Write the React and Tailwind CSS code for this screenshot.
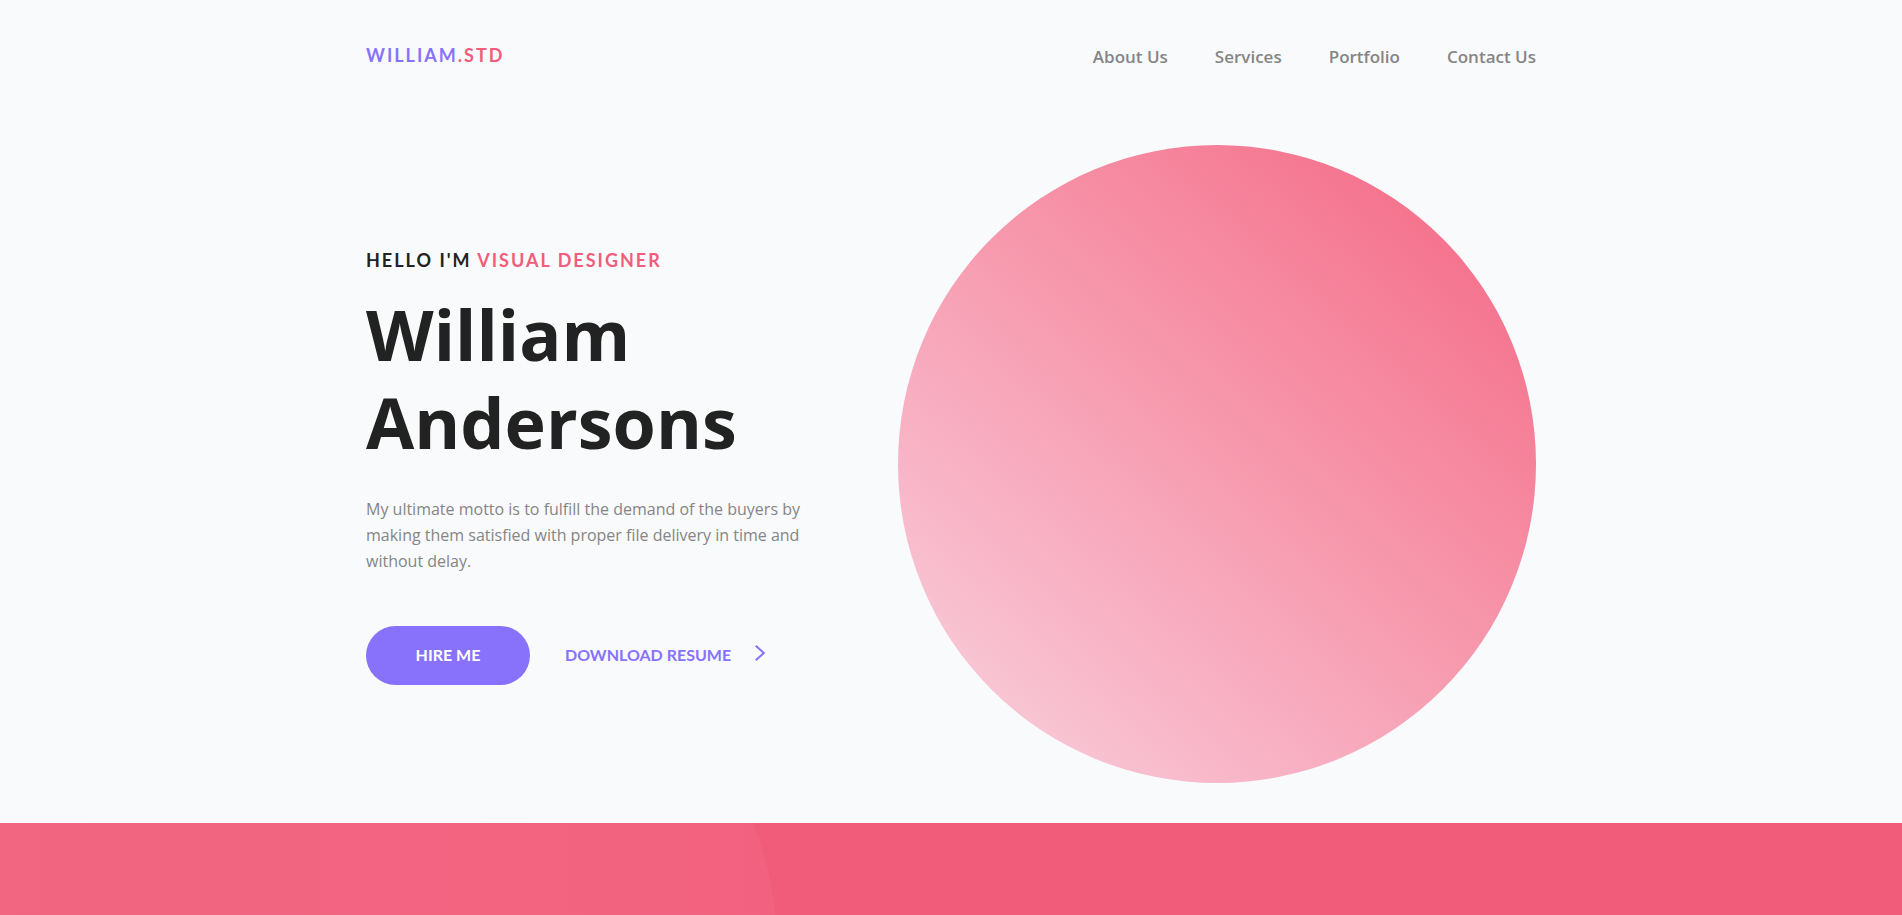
const navLinks = [
  { label: "About Us", href: "#about" },
  { label: "Services", href: "#services" },
  { label: "Portfolio", href: "#portfolio" },
  { label: "Contact Us", href: "#contact" },
];

function Header() {
  return (
    <header className="flex h-[145px] items-start justify-between pt-10">
      <a
        href="#home"
        className="text-lg leading-[30px] font-bold tracking-[2px] text-[#8872fc]"
      >
        WILLIAM<span className="text-[#f15d7a]">.STD</span>
      </a>
      <nav
        aria-label="Main"
        className="flex gap-[47px] pt-0.5 font-['Open_Sans',sans-serif] text-[17px] leading-[30px] font-semibold text-[#858585]"
      >
        {navLinks.map((link) => (
          <a key={link.href} href={link.href}>
            {link.label}
          </a>
        ))}
      </nav>
    </header>
  );
}

function Hero() {
  return (
    <section className="grid grid-cols-[5fr_6fr] items-center pb-10">
      <div>
        <p className="text-lg leading-8 font-bold tracking-[2px] text-[#222222]">
          HELLO I'M <span className="text-[#f15d7a]">VISUAL DESIGNER</span>
        </p>
        <h1 className="mt-3.5 font-['Open_Sans',sans-serif] text-[70px] leading-[88px] font-bold text-[#222222]">
          William Andersons
        </h1>
        <p className="mt-[30px] max-w-[460px] font-['Open_Sans',sans-serif] text-base leading-[26px] text-[#858585]">
          My ultimate motto is to fulfill the demand of the buyers by making
          them satisfied with proper file delivery in time and without delay.
        </p>
        <div className="mt-[52px] flex items-center gap-[35px] text-base font-bold">
          <button
            type="button"
            className="h-[59px] w-[164px] rounded-full bg-[#8872fc] text-white"
          >
            HIRE ME
          </button>
          <a
            href="#resume"
            className="flex items-center gap-6 text-[#8872fc]"
          >
            DOWNLOAD RESUME
            <svg
              className="mb-1"
              width="10"
              height="16"
              viewBox="0 0 10 16"
              fill="none"
              stroke="currentColor"
              strokeWidth="2"
              aria-hidden="true"
            >
              <path d="M0.8 0.7 L8.8 8 L0.8 15.3" />
            </svg>
          </a>
        </div>
      </div>
      <div className="aspect-square rounded-full bg-[linear-gradient(42deg,#f8cad7_10%,#f8b5c7_27%,#f79cb0_50%,#f58098_76%,#f56a87_93%)]" />
    </section>
  );
}

function Band() {
  return (
    <section className="relative min-h-[91px] flex-1 overflow-hidden bg-[#f05c79]">
      <svg
        className="absolute top-0 left-0"
        width="780"
        height="254"
        viewBox="0 0 780 254"
        aria-hidden="true"
      >
        <defs>
          <linearGradient id="band-glow" x1="0" y1="0" x2="1" y2="0">
            <stop offset="0" stopColor="#f26682" />
            <stop offset="1" stopColor="#f26280" />
          </linearGradient>
        </defs>
        <path
          d="M0 0 H753 A345 345 0 0 1 753 254 H0 Z"
          fill="url(#band-glow)"
        />
      </svg>
    </section>
  );
}

export default function App() {
  return (
    <div className="flex min-h-screen flex-col bg-[#f9fafc] font-['Lato',sans-serif]">
      <div className="mx-auto w-full max-w-[1202px] px-4">
        <Header />
        <Hero />
      </div>
      <Band />
    </div>
  );
}
